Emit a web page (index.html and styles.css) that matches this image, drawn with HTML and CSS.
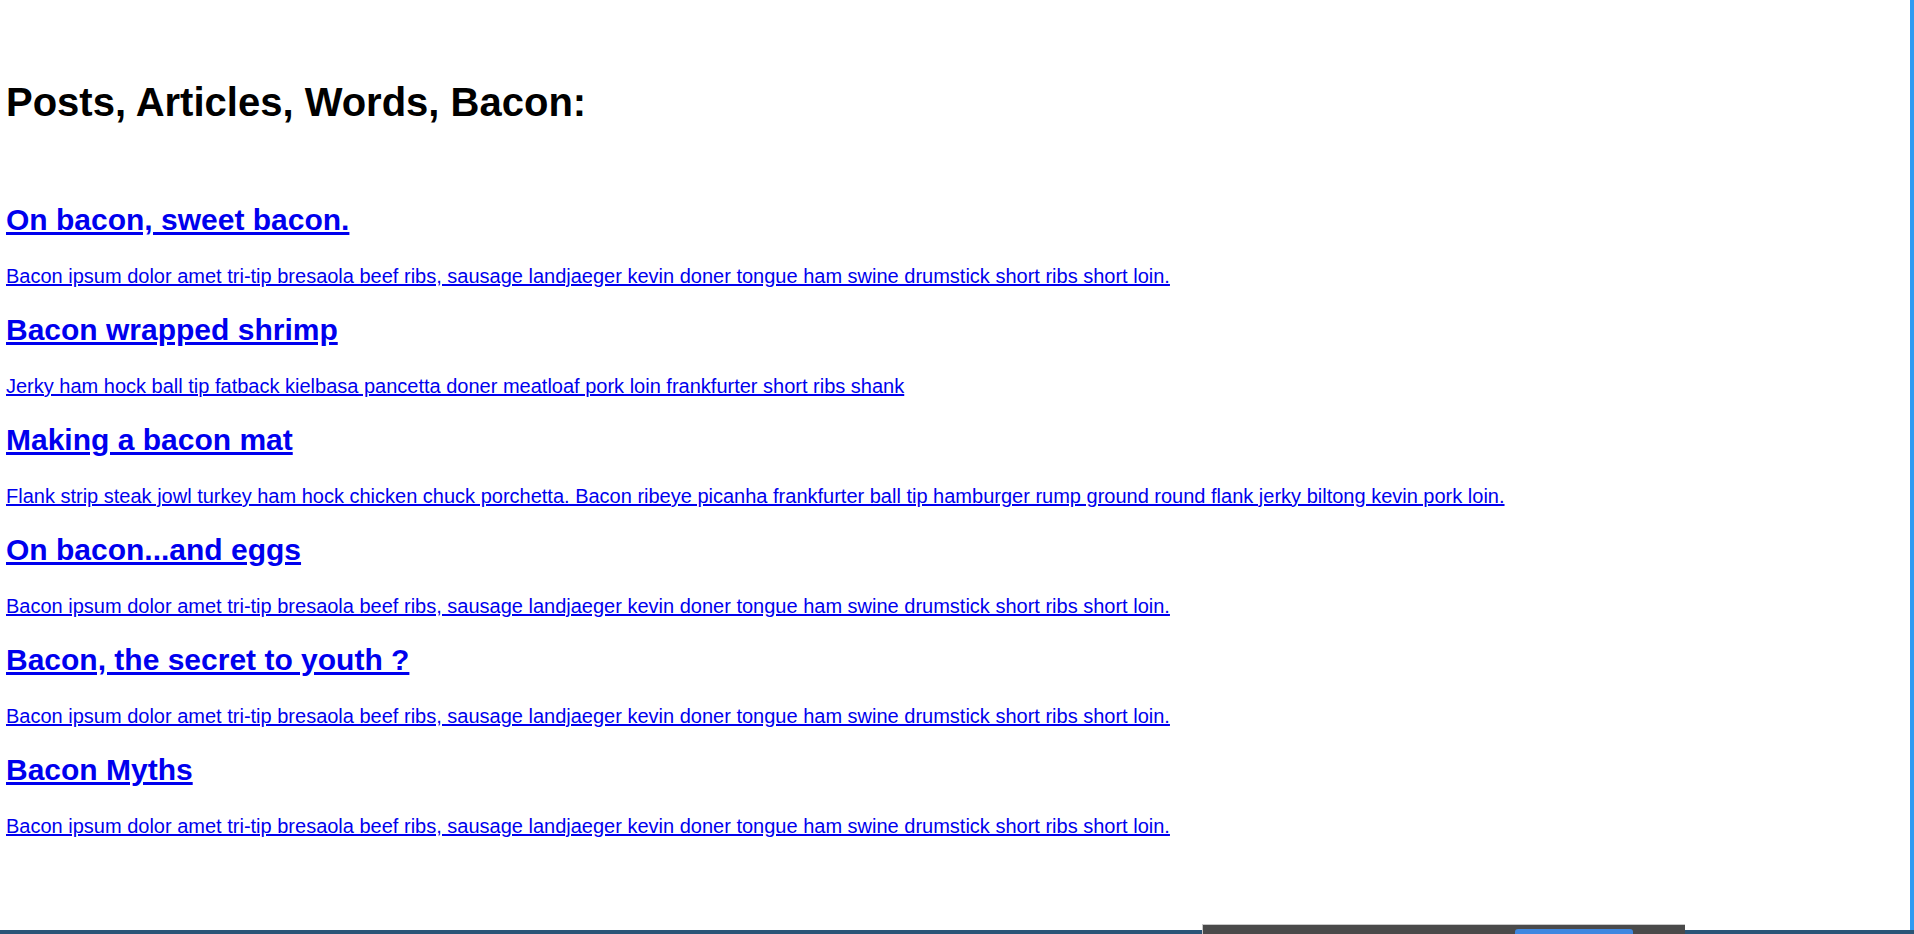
FILE: index.html
```html
<!DOCTYPE html>
<html lang="en">
<head>
<meta charset="utf-8">
<title>Posts, Articles, Words, Bacon</title>
<link rel="stylesheet" href="styles.css">
</head>
<body>
<main class="page">
  <h1 class="page-title">Posts, Articles, Words, Bacon:</h1>
  <ul class="posts">
    <li class="post">
      <a class="post-title" href="#">On bacon, sweet bacon.</a>
      <a class="post-excerpt" href="#">Bacon ipsum dolor amet tri-tip bresaola beef ribs, sausage landjaeger kevin doner tongue ham swine drumstick short ribs short loin.</a>
    </li>
    <li class="post">
      <a class="post-title" href="#">Bacon wrapped shrimp</a>
      <a class="post-excerpt" href="#">Jerky ham hock ball tip fatback kielbasa pancetta doner meatloaf pork loin frankfurter short ribs shank</a>
    </li>
    <li class="post">
      <a class="post-title" href="#">Making a bacon mat</a>
      <a class="post-excerpt" href="#">Flank strip steak jowl turkey ham hock chicken chuck porchetta. Bacon ribeye picanha frankfurter ball tip hamburger rump ground round flank jerky biltong kevin pork loin.</a>
    </li>
    <li class="post">
      <a class="post-title" href="#">On bacon...and eggs</a>
      <a class="post-excerpt" href="#">Bacon ipsum dolor amet tri-tip bresaola beef ribs, sausage landjaeger kevin doner tongue ham swine drumstick short ribs short loin.</a>
    </li>
    <li class="post">
      <a class="post-title" href="#">Bacon, the secret to youth ?</a>
      <a class="post-excerpt" href="#">Bacon ipsum dolor amet tri-tip bresaola beef ribs, sausage landjaeger kevin doner tongue ham swine drumstick short ribs short loin.</a>
    </li>
    <li class="post">
      <a class="post-title" href="#">Bacon Myths</a>
      <a class="post-excerpt" href="#">Bacon ipsum dolor amet tri-tip bresaola beef ribs, sausage landjaeger kevin doner tongue ham swine drumstick short ribs short loin.</a>
    </li>
  </ul>
</main>
<div class="edge-right"></div>
<div class="edge-bottom"></div>
<div class="dock"><span class="dock-button"></span></div>
</body>
</html>
```

FILE: styles.css
```css
html, body {
  margin: 0;
  padding: 0;
  background: #ffffff;
}
body {
  font-family: "Liberation Sans", Arial, sans-serif;
  color: #000;
}
.page {
  padding: 81px 0 0 6px;
}
.page-title {
  margin: 0;
  font-size: 40px;
  line-height: 42px;
  font-weight: bold;
}
.posts {
  list-style: none;
  margin: 81px 0 0;
  padding: 0;
}
.post {
  display: flex;
  flex-direction: column;
  align-items: flex-start;
  height: 110px;
}
.post-title {
  font-size: 30px;
  line-height: 32px;
  font-weight: bold;
  color: #0000ee;
  text-decoration: underline;
  margin-bottom: 29px;
}
.post-excerpt {
  font-size: 20px;
  line-height: 22px;
  color: #0000ee;
  text-decoration: underline;
}
.edge-right {
  position: fixed;
  top: 0;
  right: 0;
  bottom: 0;
  width: 4px;
  background: #2f9bf2;
}
.edge-bottom {
  position: fixed;
  left: 0;
  right: 0;
  bottom: 0;
  height: 4px;
  background: #2a5577;
}
.dock {
  position: fixed;
  left: 1202px;
  bottom: 0;
  width: 483px;
  height: 10px;
  background: #4a4a4a;
  border-top: 1px solid #c8c8c8;
  border-left: 1px solid #c8c8c8;
  box-sizing: border-box;
}
.dock-button {
  position: absolute;
  left: 312px;
  bottom: 0;
  width: 118px;
  height: 5px;
  background: #3f87e0;
  border-radius: 3px 3px 0 0;
}
```
